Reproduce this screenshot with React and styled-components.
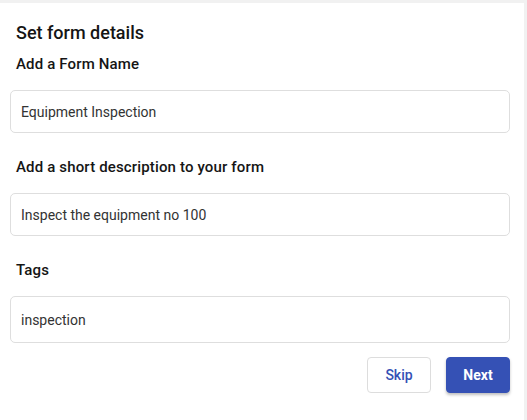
import React, { useState } from 'react'
import styled, { createGlobalStyle } from 'styled-components'

const GlobalStyle = createGlobalStyle`
  html, body {
    margin: 0;
    padding: 0;
    background: #f1f1f1;
    font-family: Roboto, "Noto Sans", "Liberation Sans", sans-serif;
  }
  * { box-sizing: border-box; }
`

function App() {
  const [name, setName] = useState('Equipment Inspection')
  const [desc, setDesc] = useState('Inspect the equipment no 100')
  const [tags, setTags] = useState('inspection')

  return (
    <Page>
      <GlobalStyle />
      <Card>
        <Title>Set form details</Title>
        <Label>Add a Form Name</Label>
        <Input value={name} onChange={e => setName(e.target.value)} />
        <Label spaced>Add a short description to your form</Label>
        <Input value={desc} onChange={e => setDesc(e.target.value)} />
        <Label spaced>Tags</Label>
        <Input tall value={tags} onChange={e => setTags(e.target.value)} />
        <Actions>
          <Button>Skip</Button>
          <Button primary>Next</Button>
        </Actions>
      </Card>
    </Page>
  )
}

export default App

const Page = styled.div`
  padding: 3px 3px 0 0;
  height: 420px;
`

const Card = styled.div`
  background: #ffffff;
  height: 417px;
  padding: 19px 14px 0 10px;
  display: flex;
  flex-direction: column;
`

const Title = styled.h2`
  margin: 0 0 10px 6px;
  font-size: 18px;
  line-height: 22px;
  font-weight: 500;
  color: #151515;
`

const Label = styled.h3`
  margin: ${p => (p.spaced ? '24px' : '0')} 0 16px 6px;
  font-size: 15px;
  line-height: 20px;
  font-weight: 500;
  letter-spacing: 0.15px;
  color: #151515;
`

const Input = styled.input`
  width: 100%;
  height: ${p => (p.tall ? '47px' : '43px')};
  border: 1px solid #dedede;
  border-radius: 5px;
  padding: 0 10px;
  font-family: inherit;
  font-size: 14px;
  color: #333;
  outline: none;
  background: #fff;
`

const Actions = styled.div`
  display: flex;
  justify-content: flex-end;
  gap: 15px;
  margin-top: 14px;
`

const Button = styled.button`
  width: 64px;
  height: 36px;
  border-radius: 4px;
  font-family: inherit;
  font-size: 14px;
  font-weight: ${p => (p.primary ? 700 : 500)};
  cursor: pointer;
  border: 1px solid ${p => (p.primary ? '#3551b5' : '#dddddd')};
  background: ${p => (p.primary ? '#3551b5' : '#ffffff')};
  color: ${p => (p.primary ? '#ffffff' : '#3551b5')};
  box-shadow: ${p => (p.primary ? '0 2px 3px rgba(0,0,0,0.25)' : 'none')};
`
